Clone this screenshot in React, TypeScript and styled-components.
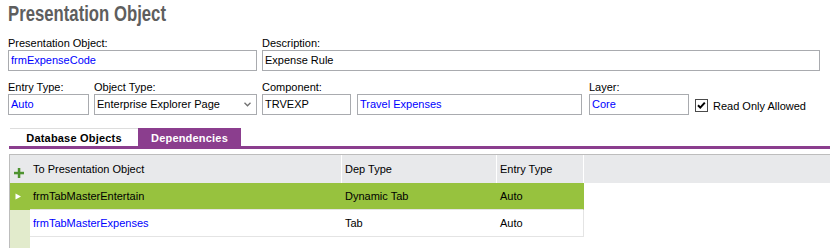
import React from "react";
import styled, { createGlobalStyle } from "styled-components";

const GlobalStyle = createGlobalStyle`
  html, body {
    margin: 0;
    padding: 0;
    background: #ffffff;
  }
  body {
    font-family: "Liberation Sans", Arial, sans-serif;
    font-size: 11px;
    color: #000000;
  }
`;

const blue = "#0000ff";
const purple = "#8b3e8e";
const rowGreen = "#97c23e";
const paleGreen = "#e2ebcc";
const headerGrey = "#e8e9eb";

const Page = styled.div`
  width: 830px;
  height: 248px;
  overflow: hidden;
  display: flex;
  flex-direction: column;
`;

const Title = styled.h1`
  box-sizing: border-box;
  height: 36px;
  margin: 0;
  padding: 2px 0 0 8px;
  font-family: "Liberation Sans", Arial, sans-serif;
  font-weight: bold;
  font-size: 22px;
  line-height: 24px;
  color: #5e5e5e;
  white-space: nowrap;
`;

// the screen font is a condensed face; squeeze the regular one to the same width
const TitleText = styled.span`
  display: inline-block;
  transform: scaleX(0.76);
  transform-origin: left center;
`;

const Form = styled.div`
  display: flex;
  flex-direction: column;
  gap: 9px;
  padding-left: 8px;
`;

const FieldRow = styled.div`
  display: flex;
  align-items: flex-end;
`;

const Field = styled.div<{ $width: number; $gap?: number }>`
  display: flex;
  flex-direction: column;
  width: ${(p) => p.$width}px;
  margin-right: ${(p) => p.$gap ?? 5}px;
`;

const Label = styled.div`
  height: 14px;
  line-height: 14px;
  white-space: nowrap;
`;

const Pair = styled.div`
  display: flex;
  gap: 6px;
`;

const Box = styled.div<{ $blue?: boolean; $width?: number }>`
  box-sizing: border-box;
  height: 21px;
  ${(p) => (p.$width ? `width: ${p.$width}px;` : "width: 100%;")}
  border: 1px solid #a9abaf;
  padding: 0 2px;
  line-height: 19px;
  white-space: nowrap;
  overflow: hidden;
  color: ${(p) => (p.$blue ? blue : "#000000")};
  background: #ffffff;
`;

const SelectBox = styled(Box)`
  display: flex;
  align-items: center;
  justify-content: space-between;
  padding-right: 5px;
`;

const CheckRow = styled.label`
  display: flex;
  align-items: center;
  gap: 5px;
  height: 21px;
  padding-top: 2px;
  box-sizing: border-box;
  white-space: nowrap;
`;

const Tabs = styled.div`
  display: flex;
  margin: 13px 0 0 9px;
  padding-left: 1px;
  border-bottom: 3px solid ${purple};
`;

const Tab = styled.div<{ $active?: boolean; $width: number }>`
  box-sizing: border-box;
  width: ${(p) => p.$width}px;
  height: 18px;
  line-height: 18px;
  text-align: center;
  font-weight: bold;
  letter-spacing: 0.2px;
  border-top: 1px solid ${(p) => (p.$active ? purple : "#dddddd")};
  background: ${(p) => (p.$active ? purple : "#ffffff")};
  color: ${(p) => (p.$active ? "#ffffff" : "#000000")};
`;

const Grid = styled.div`
  flex: 1;
  display: flex;
  flex-direction: column;
  margin: 5px 0 0 9px;
  border-left: 1px solid #bdbdbd;
  border-top: 1px solid #bdbdbd;
`;

const HeaderRow = styled.div`
  display: flex;
  height: 28px;
  background: ${headerGrey};
`;

const Selector = styled.div<{ $bg: string; $height: number }>`
  flex: none;
  width: 20px;
  height: ${(p) => p.$height}px;
  display: flex;
  align-items: center;
  padding-left: 4px;
  box-sizing: border-box;
  background: ${(p) => p.$bg};
`;

const AddSelector = styled(Selector)`
  align-items: flex-end;
  padding-bottom: 5px;
`;

const HeaderCell = styled.div<{ $width: number }>`
  box-sizing: border-box;
  width: ${(p) => p.$width}px;
  padding-left: 3px;
  line-height: 28px;
  border-right: 1px solid #ffffff;
  white-space: nowrap;
`;

const Row = styled.div`
  display: flex;
`;

const DataCells = styled.div<{ $selected?: boolean }>`
  display: flex;
  height: 27px;
  box-sizing: border-box;
  border-bottom: 1px solid #e4e4e4;
  border-right: 1px solid ${(p) => (p.$selected ? rowGreen : "#e4e4e4")};
  background: ${(p) => (p.$selected ? rowGreen : "#ffffff")};
`;

const Cell = styled.div<{ $width: number; $blue?: boolean }>`
  box-sizing: border-box;
  width: ${(p) => p.$width}px;
  padding-left: 3px;
  line-height: 26px;
  white-space: nowrap;
  color: ${(p) => (p.$blue ? blue : "#000000")};
`;

const SelectorFill = styled.div`
  flex: 1;
  width: 20px;
  background: ${paleGreen};
`;

const Chevron = () => (
  <svg width="7" height="5" viewBox="0 0 7 5">
    <polyline points="0.5,0.8 3.5,3.8 6.5,0.8" fill="none" stroke="#707070" strokeWidth="1.3" />
  </svg>
);

const CheckMark = () => (
  <svg width="13" height="13" viewBox="0 0 13 13">
    <rect x="0.5" y="0.5" width="12" height="12" fill="#ffffff" stroke="#4a4a4a" />
    <polyline points="3,6.2 5.3,8.6 9.8,3.6" fill="none" stroke="#000000" strokeWidth="2" />
  </svg>
);

const PlusIcon = () => (
  <svg width="10" height="10" viewBox="0 0 10 10">
    <rect x="3.8" y="0" width="2.5" height="10" fill="#4e9330" />
    <rect x="0" y="3.8" width="10" height="2.5" fill="#4e9330" />
  </svg>
);

const RowArrow = () => (
  <svg width="7" height="7" viewBox="0 0 7 7" style={{ marginLeft: 1 }}>
    <polygon points="0.5,0.5 6,3.5 0.5,6.5" fill="#ffffff" />
  </svg>
);

const columns = [312, 155, 86];

const rows = [
  { name: "frmTabMasterEntertain", dep: "Dynamic Tab", entry: "Auto", selected: true },
  { name: "frmTabMasterExpenses", dep: "Tab", entry: "Auto", selected: false },
];

export default function App() {
  return (
    <Page>
      <GlobalStyle />
      <Title>
        <TitleText>Presentation Object</TitleText>
      </Title>
      <Form>
        <FieldRow>
          <Field $width={249}>
            <Label>Presentation Object:</Label>
            <Box $blue>frmExpenseCode</Box>
          </Field>
          <Field $width={558}>
            <Label>Description:</Label>
            <Box>Expense Rule</Box>
          </Field>
        </FieldRow>
        <FieldRow>
          <Field $width={81}>
            <Label>Entry Type:</Label>
            <Box $blue>Auto</Box>
          </Field>
          <Field $width={163}>
            <Label>Object Type:</Label>
            <SelectBox>
              <span>Enterprise Explorer Page</span>
              <Chevron />
            </SelectBox>
          </Field>
          <Field $width={320} $gap={7}>
            <Label>Component:</Label>
            <Pair>
              <Box $width={89}>TRVEXP</Box>
              <Box $width={225} $blue>
                Travel Expenses
              </Box>
            </Pair>
          </Field>
          <Field $width={100} $gap={6}>
            <Label>Layer:</Label>
            <Box $blue>Core</Box>
          </Field>
          <CheckRow>
            <CheckMark />
            Read Only Allowed
          </CheckRow>
        </FieldRow>
      </Form>
      <Tabs>
        <Tab $width={128}>Database Objects</Tab>
        <Tab $width={103} $active>
          Dependencies
        </Tab>
      </Tabs>
      <Grid>
        <HeaderRow>
          <AddSelector $bg={headerGrey} $height={28}>
            <PlusIcon />
          </AddSelector>
          <HeaderCell $width={312}>To Presentation Object</HeaderCell>
          <HeaderCell $width={155}>Dep Type</HeaderCell>
          <HeaderCell $width={87}>Entry Type</HeaderCell>
        </HeaderRow>
        {rows.map((r) => (
          <Row key={r.name}>
            <Selector $bg={r.selected ? rowGreen : paleGreen} $height={27}>
              {r.selected && <RowArrow />}
            </Selector>
            <DataCells $selected={r.selected}>
              <Cell $width={columns[0]} $blue={!r.selected}>
                {r.name}
              </Cell>
              <Cell $width={columns[1]}>{r.dep}</Cell>
              <Cell $width={columns[2]}>{r.entry}</Cell>
            </DataCells>
          </Row>
        ))}
        <SelectorFill />
      </Grid>
    </Page>
  );
}
